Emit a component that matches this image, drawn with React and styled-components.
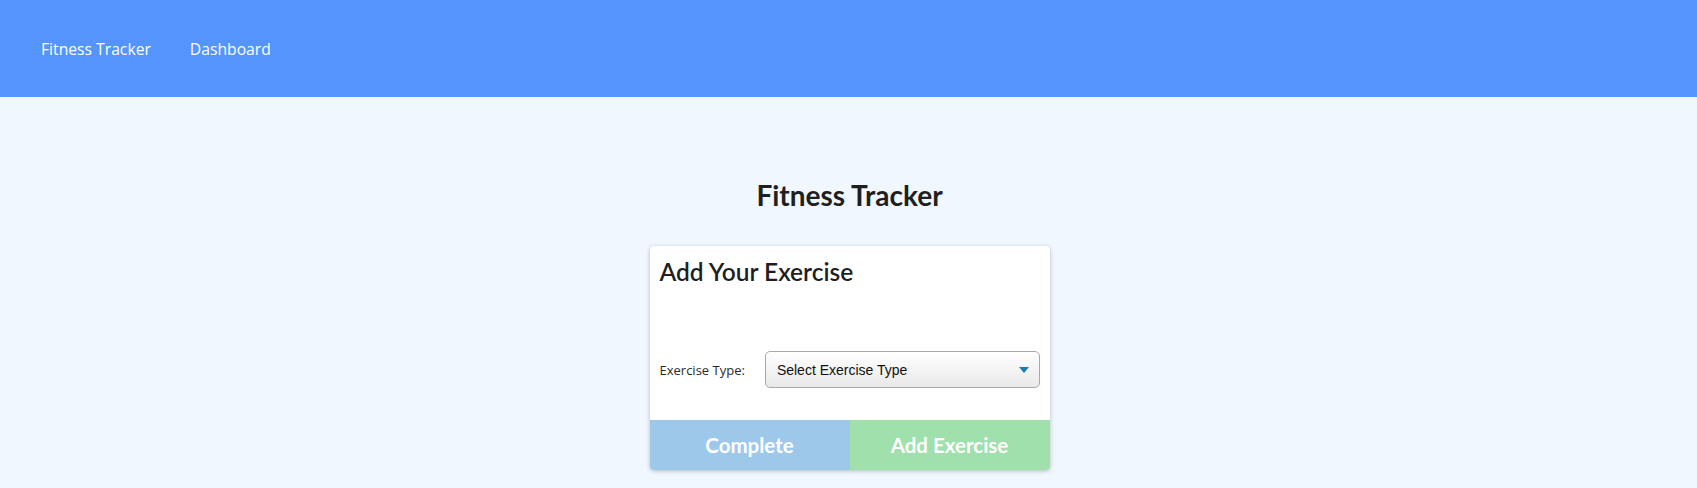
import React, { useState } from 'react';
import styled, { createGlobalStyle } from 'styled-components';

const colors = {
  nav: '#5593fd',
  page: '#f0f7ff',
  text: '#1f1f1f',
  complete: '#9dc8ea',
  add: '#9fe0ad',
  arrow: '#1b7db0',
};

const GlobalStyle = createGlobalStyle`
  html, body {
    margin: 0;
    padding: 0;
    background: ${colors.page};
    font-family: "Lato", "Noto Sans", sans-serif;
  }
`;

const Page = styled.div`
  min-height: 488px;
  background: ${colors.page};
`;

const NavBar = styled.header`
  display: flex;
  align-items: center;
  gap: 39px;
  height: 97px;
  padding: 0 0 0 41px;
  background: ${colors.nav};
`;

const NavLink = styled.a`
  color: #ffffff;
  font-family: "Open Sans", "Noto Sans", sans-serif;
  font-size: 15.7px;
  text-decoration: none;
  cursor: pointer;
  margin-top: 1px;
`;

const Main = styled.main`
  display: flex;
  flex-direction: column;
  align-items: center;
  padding: 81px 0 0 2px;
`;

const Title = styled.h1`
  margin: 0 0 34px;
  color: ${colors.text};
  font-size: 28px;
  font-weight: 700;
  line-height: 34px;
`;

const Card = styled.section`
  display: flex;
  flex-direction: column;
  width: 400px;
  background: #ffffff;
  border-radius: 4px;
  box-shadow: 0 1px 4px rgba(0, 0, 0, 0.25);
  overflow: hidden;
`;

const CardTitle = styled.h2`
  margin: 0;
  padding: 11px 10px 0;
  color: ${colors.text};
  font-size: 24.5px;
  font-weight: 600;
  line-height: 30px;
`;

const FieldRow = styled.div`
  display: flex;
  align-items: center;
  gap: 20px;
  padding: 64px 10px 32px 10px;
`;

const Label = styled.label`
  font-family: "Open Sans", "Noto Sans", sans-serif;
  font-size: 13px;
  color: #2a2a2a;
`;

const SelectBox = styled.div`
  position: relative;
  display: flex;
  align-items: center;
  flex: 1;
  box-sizing: border-box;
  height: 37px;
  padding: 0 0 0 11px;
  border: 1px solid #a8a8a8;
  border-radius: 5px;
  background: linear-gradient(#ffffff, #e9e9e9);
  font-family: "Liberation Sans", Arial, sans-serif;
  font-size: 14px;
  color: #111111;
  cursor: pointer;
`;

const Caret = styled.span`
  position: absolute;
  right: 10px;
  top: 15px;
  width: 0;
  height: 0;
  border-left: 5px solid transparent;
  border-right: 5px solid transparent;
  border-top: 6px solid ${colors.arrow};
`;

const ButtonRow = styled.div`
  display: grid;
  grid-template-columns: 1fr 1fr;
`;

const ActionButton = styled.button`
  height: 50px;
  border: none;
  background: ${(p) => p.$bg};
  color: #ffffff;
  font-family: "Lato", sans-serif;
  font-size: 20.5px;
  font-weight: 700;
  cursor: pointer;
`;

export default function App() {
  const [type] = useState('Select Exercise Type');

  return (
    <Page>
      <GlobalStyle />
      <NavBar>
        <NavLink>Fitness Tracker</NavLink>
        <NavLink>Dashboard</NavLink>
      </NavBar>
      <Main>
        <Title>Fitness Tracker</Title>
        <Card>
          <CardTitle>Add Your Exercise</CardTitle>
          <FieldRow>
            <Label>Exercise Type:</Label>
            <SelectBox>
              {type}
              <Caret />
            </SelectBox>
          </FieldRow>
          <ButtonRow>
            <ActionButton $bg={colors.complete}>Complete</ActionButton>
            <ActionButton $bg={colors.add}>Add Exercise</ActionButton>
          </ButtonRow>
        </Card>
      </Main>
    </Page>
  );
}
